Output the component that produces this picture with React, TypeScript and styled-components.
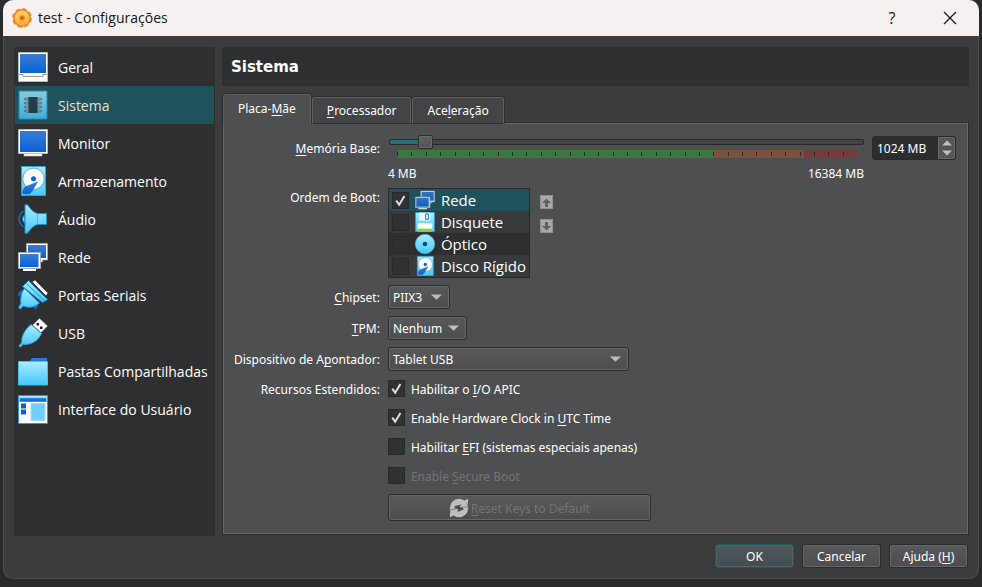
import React, { useState } from 'react';
import styled, { createGlobalStyle, css } from 'styled-components';

const uiFont = '"Noto Sans", "Open Sans", sans-serif';
const shellFont = '"Open Sans", "Noto Sans", sans-serif';

const GlobalStyle = createGlobalStyle`
  *, *::before, *::after { box-sizing: border-box; }
  body { margin: 0; background: #292a2a; color: #fff; font: 12px/16px ${uiFont}; }
  button, input, select { font: inherit; color: inherit; margin: 0; }
  u { text-decoration: underline; text-underline-offset: 2px; text-decoration-skip-ink: none; }
`;

const Desktop = styled.div`
  display: flex;
  min-height: 100vh;
  padding: 0 3px 8px;
`;

const Dialog = styled.main`
  flex: 1;
  min-width: 0;
  display: flex;
  flex-direction: column;
  background: #3b3c3e;
  border-radius: 10px;
  overflow: hidden;
  box-shadow: inset 0 0 0 1px #4c4d4f;
`;

const TitleBar = styled.header`
  display: flex;
  align-items: center;
  height: 36px;
  padding: 0 20px 0 8px;
  background: #f6f1f1;
  color: #161616;
  font: 14px/20px ${shellFont};
`;

const Title = styled.span`
  flex: 1;
  padding-left: 5px;
`;

const TitleButton = styled.button`
  display: grid;
  place-items: center;
  width: 18px;
  height: 24px;
  margin-left: 40px;
  padding: 0;
  border: 0;
  background: none;
  font-size: 16px;
`;

const Body = styled.div`
  flex: 1;
  display: flex;
  gap: 7px;
  padding: 11px 10px 10px 11px;
`;

const Sidebar = styled.nav`
  flex: none;
  width: 201px;
  padding: 1px;
  margin-bottom: -2px;
  background: #2e2f31;
`;

const NavItem = styled.button<{ $active?: boolean }>`
  display: flex;
  align-items: center;
  gap: 10px;
  width: 100%;
  height: 38px;
  padding: 0 3px;
  border: 0;
  background: ${p => (p.$active ? '#1f525a' : 'transparent')};
  font: 14px/20px ${shellFont};
  text-align: left;
  white-space: nowrap;
`;

const NavLabel = styled.span<{ $active?: boolean }>`
  padding-top: 2px;
  color: ${p => (p.$active ? '#e3e3d8' : '#fff')};
`;

const Content = styled.section`
  flex: 1;
  min-width: 0;
  display: flex;
  flex-direction: column;
`;

const PageTitle = styled.h1`
  margin: 0 0 8px;
  padding: 11px 9px 9px;
  background: #2e2f31;
  font: bold 15px/19px "DejaVu Sans", sans-serif;
`;

const TabList = styled.div`
  position: relative;
  display: flex;
  align-items: flex-end;
  gap: 1px;
  padding-left: 1px;
  margin-bottom: -1px;
`;

const Tab = styled.button<{ $active?: boolean }>`
  height: 27px;
  padding: 0 14px;
  border: 1px solid #5f6061;
  border-bottom-color: #2b2c2d;
  border-radius: 3px 3px 0 0;
  background: #434446;
  box-shadow: 0 0 0 1px #2b2c2d;
  clip-path: inset(-1px -1px 0 -1px);
  ${p =>
    p.$active &&
    css`
      height: 30px;
      border-bottom-color: #4e4f51;
      background: #4e4f51;
    `}
`;

const Pane = styled.div`
  flex: 1;
  margin: 0 1px;
  padding: 11px 11px 10px 10px;
  border: 1px solid #68696b;
  outline: 1px solid #2b2c2d;
  background: #4e4f51;
`;

const Form = styled.div`
  display: grid;
  grid-template-columns: max-content 1fr;
  column-gap: 8px;
  row-gap: 7px;
`;

const FieldLabel = styled.label<{ $top?: number }>`
  padding-top: ${p => p.$top ?? 5}px;
  text-align: right;
`;

const MemoryRow = styled.div`
  display: flex;
  align-items: flex-start;
  gap: 8px;
`;

const MemoryScale = styled.div`
  flex: 1;
  min-width: 0;
`;

const MemorySlider = styled.input<{ $percent: number }>`
  display: block;
  width: calc(100% - 1px);
  height: 14px;
  margin-left: 1px;
  appearance: none;
  background: none;
  &::-webkit-slider-runnable-track {
    height: 6px;
    border: 1px solid #29292a;
    border-radius: 2px;
    background: linear-gradient(to right, #24717a ${p => p.$percent}%, #424345 ${p => p.$percent}%);
  }
  &::-webkit-slider-thumb {
    appearance: none;
    width: 15px;
    height: 14px;
    margin-top: -5px;
    border: 1px solid #2d2e2f;
    border-radius: 2px;
    background: linear-gradient(#5f6062, #535456);
    box-shadow: inset 0 0 0 1px #6a6b6d;
  }
`;

const ScaleBar = styled.svg`
  display: block;
  width: calc(100% - 16px);
  height: 8px;
  margin: 1px 7px 0 9px;
`;

const ScaleEnds = styled.div`
  display: flex;
  justify-content: space-between;
  height: 15px;
  margin-top: 8px;
`;

const SpinBox = styled.div`
  flex: none;
  display: flex;
  width: 84px;
  height: 24px;
  margin-top: 1px;
  border: 1px solid #29292a;
  border-radius: 3px;
  background: #2c2d2f;
  overflow: hidden;
`;

const SpinInput = styled.input`
  flex: 1;
  min-width: 0;
  padding: 2px 4px 0;
  border: 0;
  background: none;
`;

const SpinButtons = styled.div`
  display: flex;
  flex-direction: column;
  width: 17px;
  border: 1px solid #68696b;
  border-radius: 0 2px 2px 0;
  background: #545557;
`;

const SpinButton = styled.button`
  flex: 1;
  display: grid;
  place-items: center;
  min-height: 0;
  padding: 0;
  border: 0;
  background: none;
`;

const BootRow = styled.div`
  display: flex;
  align-items: flex-start;
  gap: 10px;
`;

const BootList = styled.ul`
  margin: 0;
  padding: 0;
  border: 1px solid #29292a;
  list-style: none;
  font: 15px/22px ${shellFont};
`;

const BootItem = styled.li<{ $tone: string }>`
  display: flex;
  align-items: center;
  height: 22px;
  padding: 0 3px;
  background: ${p => p.$tone};
`;

const BootLabel = styled.label`
  display: flex;
  align-items: center;
  gap: 6px;
  padding-left: 6px;
`;

const MoveButtons = styled.div`
  display: flex;
  flex-direction: column;
  gap: 10px;
  padding-top: 7px;
`;

const MoveButton = styled.button`
  display: grid;
  place-items: center;
  width: 13px;
  height: 14px;
  padding: 0;
  border: 1px solid #8e8f90;
  background: #a8a8a9;
`;

const tick = `url("data:image/svg+xml,%3Csvg xmlns='http://www.w3.org/2000/svg' viewBox='0 0 17 17'%3E%3Cpath d='M3.7 8.6 7 13.3 13 3.4' fill='none' stroke='%23dededf' stroke-width='2.3'/%3E%3C/svg%3E")`;

const CheckBox = styled.input<{ $fill?: string }>`
  flex: none;
  width: 17px;
  height: 17px;
  appearance: none;
  border: 1px solid #28292a;
  background: ${p => p.$fill ?? '#303133'};
  &:checked {
    background-image: ${tick};
  }
`;

const Selector = styled.div<{ $width: number }>`
  position: relative;
  width: ${p => p.$width}px;
  max-width: 100%;
`;

const Select = styled.select`
  display: block;
  width: 100%;
  height: 24px;
  padding: 2px 20px 0 4px;
  appearance: none;
  border: 1px solid #2b2c2d;
  border-radius: 3px;
  background: linear-gradient(#58595b, #4c4d4f);
  box-shadow: inset 0 0 0 1px #68696b;
`;

const SelectArrow = styled.svg`
  position: absolute;
  top: 9px;
  right: 8px;
  pointer-events: none;
`;

const Extended = styled.div`
  display: flex;
  flex-direction: column;
  align-items: flex-start;
  gap: 10px;
  padding-top: 2px;
`;

const CheckGroup = styled.div`
  display: flex;
  flex-direction: column;
  align-items: flex-start;
  gap: 12px;
`;

const CheckLabel = styled.label<{ $disabled?: boolean }>`
  display: flex;
  align-items: center;
  gap: 6px;
  height: 17px;
  color: ${p => (p.$disabled ? '#737476' : '#fff')};
`;

const CheckText = styled.span`
  padding-top: 2px;
`;

const PushButton = styled.button<{ $primary?: boolean; $wide?: boolean }>`
  display: flex;
  align-items: center;
  justify-content: center;
  gap: 2px;
  width: ${p => (p.$wide ? 263 : 79)}px;
  max-width: 100%;
  height: ${p => (p.$wide ? 27 : 24)}px;
  padding: 0;
  border: 1px solid ${p => (p.$primary ? '#1f575f' : '#2b2c2d')};
  border-radius: 3px;
  background: ${p => (p.$primary ? 'linear-gradient(#50585a, #434d4f)' : 'linear-gradient(#58595b, #4c4d4f)')};
  box-shadow: inset 0 0 0 1px ${p => (p.$primary ? '#4f6468' : '#66676a')};
  &:disabled { color: #737476; }
`;

const ButtonText = styled.span`
  padding-top: 2px;
`;

const Footer = styled.footer`
  display: flex;
  justify-content: flex-end;
  gap: 8px;
  padding: 0 11px 11px;
`;

const Gradients = ({ id }: { id: string }) => (
  <defs>
    <linearGradient id={`${id}-b`} x1="0" y1="0" x2="0" y2="1">
      <stop offset="0" stopColor="#3a7bd5" />
      <stop offset="1" stopColor="#0764d6" />
    </linearGradient>
    <linearGradient id={`${id}-c`} x1="0" y1="0" x2="0" y2="1">
      <stop offset="0" stopColor="#a9ecff" />
      <stop offset="1" stopColor="#45c8fc" />
    </linearGradient>
  </defs>
);

type IconName =
  | 'general' | 'system' | 'display' | 'disk' | 'audio' | 'network'
  | 'serial' | 'usb' | 'folder' | 'ui' | 'floppy' | 'optical';

const drawings: Record<IconName, (b: string, c: string) => React.ReactNode> = {
  general: b => (
    <>
      <path d="M.5.5h29v29H.5z" fill="#fff" stroke="#b9b9b5" />
      <path d="M2 2h26v19H2z" fill={b} />
      <path d="M1 22.5h4v2h20v-2h4" fill="none" stroke="#999" />
    </>
  ),
  system: (_b, c) => (
    <>
      <path d="M1 1h28v28H1z" fill={c} opacity=".78" />
      <path d="M1 1h28v28H1z" fill="none" stroke="#2486bb" />
      <path d="M7.5 9h15M7.5 13h15M7.5 17h15M7.5 21h15" stroke="#335b70" strokeWidth="2.6" strokeLinecap="round" />
      <path d="M7.5 9h15M7.5 13h15M7.5 17h15M7.5 21h15" stroke="#a9b6bd" strokeWidth="1.2" strokeLinecap="round" />
      <path d="M10.5 7h9v16h-9z" fill="#263d49" />
    </>
  ),
  display: b => (
    <>
      <path d="M6 25h18v3H6z" fill="#fff" stroke="#b9b9b5" strokeWidth=".7" />
      <path d="M.5 1.5h29v24H.5z" fill="#fff" stroke="#b9b9b5" />
      <path d="M2 3h26v21H2z" fill={b} />
    </>
  ),
  disk: (b, c) => (
    <>
      <path d="M3.5.5h24v29h-24z" fill={c} stroke="#2ba5e2" />
      <circle cx="15.5" cy="12.8" r="10.7" fill="#fff" stroke="#4685a8" strokeWidth=".7" />
      <circle cx="15.5" cy="12.8" r="2.5" fill="#0867cf" />
      <path d="M19.5 16 13.5 26Q12 28.5 8.5 28L4.5 27.5 5 24.5Q6 21 9.5 20Z" fill={b} stroke="#145d9e" strokeWidth=".5" />
    </>
  ),
  audio: (_b, c) => (
    <>
      <path d="M5.5 7Q-3.500 15 5.500 23" fill="none" stroke="#1472bd" strokeWidth="1.4" />
      <path d="M7 10.500Q1.500 15 7 19.500Z" fill="#71ddff" stroke="#176aac" />
      <path d="M7 .8h2.500Q14 8 19 9.500h9.500v11H19Q14 22 9.500 29.200H7Z" fill={c} stroke="#278cbc" />
      <path d="M19.500 9.500v11" stroke="#4db9e6" />
    </>
  ),
  network: b => (
    <>
      <path d="M8.5 1.5h21V18h-5v2H22l-4-2H8.5Z" fill="#fff" stroke="#aaa" strokeWidth=".7" />
      <path d="M10 3h18v13H10z" fill={b} />
      <path d="M5 27h13v2H5z" fill="#fff" />
      <path d="M.5 10.5h22v16H.5z" fill="#fff" stroke="#aaa" />
      <path d="M2 12h18.500v13H2z" fill={b} />
    </>
  ),
  serial: (_b, c) => (
    <>
      <path d="M14.500 2 17 .3 29.700 13 28 15.500Z" fill="#fff" />
      <path d="M0 13 5 9 7 13 .5 16.500ZM15.500 26.500 18.500 22 20.500 26 17.500 29.500Z" fill="#1169cb" />
      <path d="M6.500 8.500Q2 14 2.800 23.500L.6 27.500 2 29.200 5.500 26Q14 29.500 21.500 23Z" fill={c} stroke="#249bd6" />
      <path d="M10.500.7 29.500 19.500 24.500 22.500 4.500 6.500Z" fill={c} stroke="#1684c7" />
      <path d="M8.500 3.500 26 20.500" stroke="#1674bd" strokeWidth=".8" />
    </>
  ),
  usb: (_b, c) => (
    <>
      <path d="M21.500.5 29.500 8 23 14.500 14.800 7Z" fill="#fff" stroke="#aaa" strokeWidth=".5" />
      <path d="M18.500 5H21v2.500h-2.500zM22 8.500h2.500V11H22z" fill="#222" />
      <path d="M13 6.500 23.500 15.500Q19 25.500 8 26.500L5.200 26 2.500 29 .8 27.800 3.700 25Q3 15 13 6.500Z" fill={c} stroke="#38a8de" />
    </>
  ),
  folder: (b, c) => (
    <>
      <path d="M11 6 14 2h15v8H11z" fill={b} />
      <path d="M.5 5.500h29v23.500H.5z" fill={c} stroke="#48bdec" />
    </>
  ),
  ui: (b, c) => (
    <>
      <path d="M.5 1.500h29v28H.5z" fill="#fff" stroke="#3098d8" />
      <path d="M1 2h28v6H1z" fill={c} />
      <path d="M2 4h26v3.500H2z" fill={b} />
      <path d="M3 9.500h5v5H3zM3 15.500h5v5H3z" fill="#0862cc" />
      <path d="M13 9.500h14v17H13z" fill="#72cffb" stroke="#9bdcfb" />
    </>
  ),
  floppy: (_b, c) => (
    <>
      <path d="M.5.5h29v29H.5z" fill={c} stroke="#278bca" />
      <path d="M6 1h17v12H6z" fill="#e8f7ff" />
      <path d="M16 3h4v8h-4z" fill="#fff" stroke="#1875bd" strokeWidth="1.500" />
      <path d="M4 17h22v12H4z" fill="#fff" />
      <path d="M4 25h22v4H4z" fill="#82d83b" />
    </>
  ),
  optical: (_b, c) => (
    <>
      <circle cx="15" cy="15" r="14.500" fill={c} stroke="#55bce9" />
      <circle cx="15" cy="15" r="3.500" fill="#174c66" />
    </>
  ),
};

const Icon = ({ name, size = 30, dim }: { name: IconName; size?: number; dim?: boolean }) => {
  const id = `${name}-${size}`;
  return (
    <svg width={size} height={size} viewBox="0 0 30 30" opacity={dim ? 0.8 : 1} aria-hidden="true">
      <Gradients id={id} />
      {drawings[name](`url(#${id}-b)`, `url(#${id}-c)`)}
    </svg>
  );
};

const GearIcon = () => (
  <svg width="22" height="22" viewBox="0 0 22 22" aria-hidden="true">
    <defs>
      <linearGradient id="gear" x1="0" y1="0" x2="0" y2="1">
        <stop offset="0" stopColor="#ffd466" />
        <stop offset="1" stopColor="#f9a93a" />
      </linearGradient>
    </defs>
    <circle cx="11" cy="11" r="8.200" fill="url(#gear)" stroke="#ea8528" strokeWidth="1.600" />
    <circle cx="11" cy="11" r="9" fill="none" stroke="#ee8a2b" strokeWidth="1.800" strokeDasharray="4.600 2.469" />
    <circle cx="11" cy="11" r="2" fill="#a65c17" stroke="#ed8622" strokeWidth="1.600" />
  </svg>
);

const ResetIcon = () => (
  <svg width="20" height="20" viewBox="0 0 20 20" aria-hidden="true">
    <circle cx="10" cy="10" r="9.200" fill="#bebebf" />
    <path d="M14.500 3 19 .8V6ZM5.500 17 1 19.200V14Z" fill="#bebebf" />
    <path d="M0 11.500h6.500M13.500 9h6.500" stroke="#77787a" strokeWidth=".8" />
    <path d="M12.500 6.500 6 8 5.500 10.500 9 11 8.500 14 14.500 11.500 14 9.500 10.500 9Z" fill="#4b4c4e" />
  </svg>
);

const Triangle = ({ down }: { down?: boolean }) => (
  <svg width="10" height="6" viewBox="0 0 10 6" aria-hidden="true">
    <path d={down ? 'M0 .5h10L5 5.500Z' : 'M0 5.500h10L5 .5Z'} fill="#bebebf" />
  </svg>
);

const MoveArrow = ({ down }: { down?: boolean }) => (
  <svg width="9" height="9" viewBox="0 0 9 9" aria-hidden="true">
    <path d={down ? 'M3 0h3v4h3L4.500 8.500 0 4h3Z' : 'M3 9h3V5h3L4.500 .5 0 5h3Z'} fill="#5f6061" />
  </svg>
);

const Dropdown = ({ id, value, width }: { id: string; value: string; width: number }) => (
  <Selector $width={width}>
    <Select id={id} defaultValue={value}>
      <option>{value}</option>
    </Select>
    <SelectArrow width="11" height="6" viewBox="0 0 11 6" aria-hidden="true">
      <path d="M0 .5h11L5.500 5.800Z" fill="#bebebf" />
    </SelectArrow>
  </Selector>
);

const navItems: [IconName, string][] = [
  ['general', 'Geral'],
  ['system', 'Sistema'],
  ['display', 'Monitor'],
  ['disk', 'Armazenamento'],
  ['audio', 'Áudio'],
  ['network', 'Rede'],
  ['serial', 'Portas Seriais'],
  ['usb', 'USB'],
  ['folder', 'Pastas Compartilhadas'],
  ['ui', 'Interface do Usuário'],
];

const bootItems: { icon: IconName; name: string; tone: string; fill: string; checked?: boolean }[] = [
  { icon: 'network', name: 'Rede', tone: '#1f525a', fill: '#303133', checked: true },
  { icon: 'floppy', name: 'Disquete', tone: '#38393b', fill: '#303133' },
  { icon: 'optical', name: 'Óptico', tone: '#2e2f31', fill: '#2e2f31' },
  { icon: 'disk', name: 'Disco Rígido', tone: '#38393b', fill: '#303133' },
];

const tickMarks = Array.from({ length: 32 }, (_, i) => i);

export default function App() {
  const [memory, setMemory] = useState(1024);
  const percent = ((memory - 4) / 16380) * 100;

  return (
    <Desktop>
      <GlobalStyle />
      <Dialog>
        <TitleBar>
          <GearIcon />
          <Title>test - Configurações</Title>
          <TitleButton aria-label="Ajuda">?</TitleButton>
          <TitleButton aria-label="Fechar">
            <svg width="14" height="14" viewBox="0 0 14 14" aria-hidden="true">
              <path d="M1 1 13 13M13 1 1 13" stroke="#161616" strokeWidth="1.200" />
            </svg>
          </TitleButton>
        </TitleBar>
        <Body>
          <Sidebar>
            {navItems.map(([icon, label]) => {
              const active = icon === 'system';
              return (
                <NavItem key={icon} $active={active} aria-current={active ? 'page' : undefined}>
                  <Icon name={icon} />
                  <NavLabel $active={active}>{label}</NavLabel>
                </NavItem>
              );
            })}
          </Sidebar>
          <Content>
            <PageTitle>Sistema</PageTitle>
            <TabList role="tablist">
              <Tab role="tab" aria-selected="true" $active>Placa-<u>M</u>ãe</Tab>
              <Tab role="tab" aria-selected="false"><u>P</u>rocessador</Tab>
              <Tab role="tab" aria-selected="false">Ace<u>l</u>eração</Tab>
            </TabList>
            <Pane role="tabpanel">
              <Form>
                <FieldLabel htmlFor="memory" $top={6}><u>M</u>emória Base:</FieldLabel>
                <MemoryRow>
                  <MemoryScale>
                    <MemorySlider
                      id="memory"
                      type="range"
                      min={4}
                      max={16384}
                      value={memory}
                      $percent={percent}
                      onChange={e => setMemory(Number(e.target.value))}
                    />
                    <ScaleBar aria-hidden="true" shapeRendering="crispEdges">
                      <rect width="69%" height="8" fill="#3b783d" />
                      <rect x="69%" width="19.500%" height="8" fill="#7b503d" />
                      <rect x="88.500%" width="11.500%" height="8" fill="#783b3d" />
                      {tickMarks.map(i => (
                        <rect key={i} x={`${i * 3.125}%`} y="2" width="1" height="4" fill="#29292a" />
                      ))}
                    </ScaleBar>
                    <ScaleEnds><span>4 MB</span><span>16384 MB</span></ScaleEnds>
                  </MemoryScale>
                  <SpinBox>
                    <SpinInput
                      aria-label="Memória Base em MB"
                      value={`${memory} MB`}
                      onChange={e => setMemory(parseInt(e.target.value, 10) || 4)}
                    />
                    <SpinButtons>
                      <SpinButton aria-label="Aumentar" onClick={() => setMemory(memory + 1)}><Triangle /></SpinButton>
                      <SpinButton aria-label="Diminuir" onClick={() => setMemory(memory - 1)}><Triangle down /></SpinButton>
                    </SpinButtons>
                  </SpinBox>
                </MemoryRow>

                <FieldLabel as="span" $top={2}>Ordem de Boot:</FieldLabel>
                <BootRow>
                  <BootList>
                    {bootItems.map(item => (
                      <BootItem key={item.name} $tone={item.tone}>
                        <CheckBox
                          id={`boot-${item.icon}`}
                          type="checkbox"
                          defaultChecked={item.checked}
                          $fill={item.fill}
                        />
                        <BootLabel htmlFor={`boot-${item.icon}`}>
                          <Icon name={item.icon} size={20} dim={item.checked} />
                          {item.name}
                        </BootLabel>
                      </BootItem>
                    ))}
                  </BootList>
                  <MoveButtons>
                    <MoveButton aria-label="Mover para cima"><MoveArrow /></MoveButton>
                    <MoveButton aria-label="Mover para baixo"><MoveArrow down /></MoveButton>
                  </MoveButtons>
                </BootRow>

                <FieldLabel htmlFor="chipset"><u>C</u>hipset:</FieldLabel>
                <Dropdown id="chipset" value="PIIX3" width={62} />
                <FieldLabel htmlFor="tpm"><u>T</u>PM:</FieldLabel>
                <Dropdown id="tpm" value="Nenhum" width={79} />
                <FieldLabel htmlFor="pointer">Dispositivo de A<u>p</u>ontador:</FieldLabel>
                <Dropdown id="pointer" value="Tablet USB" width={241} />

                <FieldLabel as="span" $top={4}>Recursos Estendidos:</FieldLabel>
                <Extended>
                  <CheckGroup>
                    <CheckLabel><CheckBox type="checkbox" defaultChecked /><CheckText>Habilitar o <u>I</u>/O APIC</CheckText></CheckLabel>
                    <CheckLabel><CheckBox type="checkbox" defaultChecked /><CheckText>Enable Hardware Clock in <u>U</u>TC Time</CheckText></CheckLabel>
                    <CheckLabel><CheckBox type="checkbox" /><CheckText>Habilitar <u>E</u>FI (sistemas especiais apenas)</CheckText></CheckLabel>
                    <CheckLabel $disabled><CheckBox type="checkbox" disabled /><CheckText>Enable <u>S</u>ecure Boot</CheckText></CheckLabel>
                  </CheckGroup>
                  <PushButton $wide disabled><ResetIcon /><ButtonText><u>R</u>eset Keys to Default</ButtonText></PushButton>
                </Extended>
              </Form>
            </Pane>
          </Content>
        </Body>
        <Footer>
          <PushButton $primary><ButtonText>OK</ButtonText></PushButton>
          <PushButton><ButtonText>Cancelar</ButtonText></PushButton>
          <PushButton><ButtonText>Ajuda (<u>H</u>)</ButtonText></PushButton>
        </Footer>
      </Dialog>
    </Desktop>
  );
}
